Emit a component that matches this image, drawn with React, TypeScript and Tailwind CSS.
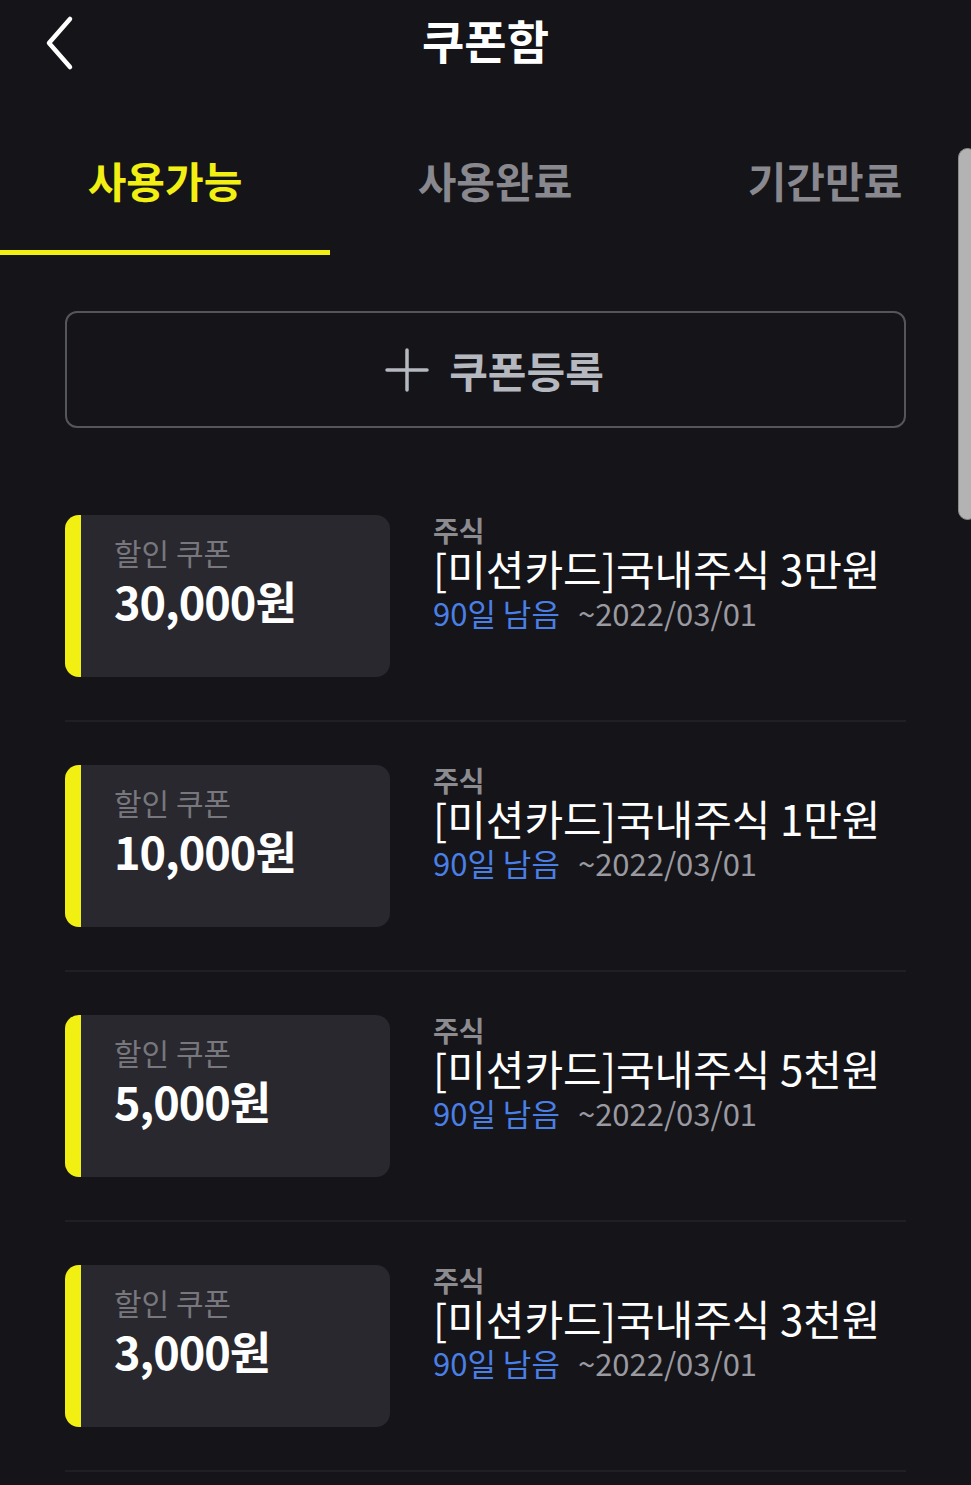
const coupons = [
  { amount: "30,000원", title: "[미션카드]국내주식 3만원" },
  { amount: "10,000원", title: "[미션카드]국내주식 1만원" },
  { amount: "5,000원", title: "[미션카드]국내주식 5천원" },
  { amount: "3,000원", title: "[미션카드]국내주식 3천원" },
];

const tabs = ["사용가능", "사용완료", "기간만료"];

function CouponRow({ amount, title }: { amount: string; title: string }) {
  return (
    <div className="border-b-2 border-[#202024] py-[43px]">
      <div className="flex items-start">
        {/* card */}
        <div className="flex h-[162px] w-[325px] shrink-0 overflow-hidden rounded-[14px] bg-[#28282e]">
          <div className="w-[16px] bg-[#f2f012]" />
          <div className="pl-[33px] pt-[16px]">
            <div className="text-[30px] leading-[42px] text-[#77777d]">할인 쿠폰</div>
            <div className="text-[45px] font-bold leading-[56px] tracking-[-1px] text-white">
              {amount}
            </div>
          </div>
        </div>

        {/* info */}
        <div className="ml-[43px]">
          <div className="text-[28px] font-bold leading-[30px] text-[#8b8b90]">주식</div>
          <div className="text-[42px] leading-[46px] text-white">{title}</div>
          <div className="flex items-baseline gap-[18px] text-[31px] leading-[44px]">
            <span className="text-[#4a7fe6]">90일 남음</span>
            <span className="text-[#9a9aa0]">~2022/03/01</span>
          </div>
        </div>
      </div>
    </div>
  );
}

export default function App() {
  return (
    <div
      className="relative min-h-[1485px] w-[971px] overflow-hidden bg-[#141419]"
      style={{ fontFamily: '"Noto Sans CJK KR", "Noto Sans", sans-serif' }}
    >
      {/* Header */}
      <header className="relative flex h-[78px] items-center justify-center">
        <button className="absolute left-[38px] top-[10px] p-1">
          <svg width="34" height="58" viewBox="0 0 34 58" fill="none">
            <path
              d="M28 5 L7 29 L28 53"
              stroke="white"
              strokeWidth="4.5"
              strokeLinecap="round"
              strokeLinejoin="round"
            />
          </svg>
        </button>
        <h1 className="text-[46px] font-bold text-white">쿠폰함</h1>
      </header>

      {/* Tabs */}
      <nav className="mt-[62px] flex">
        {tabs.map((t, i) => (
          <div
            key={t}
            className={
              i === 0
                ? "flex h-[115px] w-[330px] shrink-0 items-start justify-center border-b-[5px] border-[#f2f012] pt-[8px] text-[42px] font-bold text-[#f2f012]"
                : "flex h-[115px] w-[330px] shrink-0 items-start justify-center border-b-[5px] border-transparent pt-[8px] text-[42px] font-bold text-[#88888e]"
            }
          >
            {t}
          </div>
        ))}
      </nav>

      {/* scrollbar */}
      <div className="absolute right-[-6px] top-[148px] h-[372px] w-[19px] rounded-[10px] border border-[#8a8a8a] bg-[#b3b3b3]" />

      <main className="px-[65px]">
        <button className="mt-[56px] flex h-[117px] w-full items-center justify-center gap-[20px] rounded-[12px] border-2 border-[#55555c] pl-[18px] text-[42px] font-bold text-[#b6b8c0]">
          <svg width="44" height="44" viewBox="0 0 44 44">
            <path d="M22 2 V42 M2 22 H42" stroke="#b6b8c0" strokeWidth="3.5" strokeLinecap="round" />
          </svg>
          쿠폰등록
        </button>

        <div className="mt-[44px]">
          {coupons.map((c) => (
            <CouponRow key={c.amount} {...c} />
          ))}
        </div>
      </main>
    </div>
  );
}
